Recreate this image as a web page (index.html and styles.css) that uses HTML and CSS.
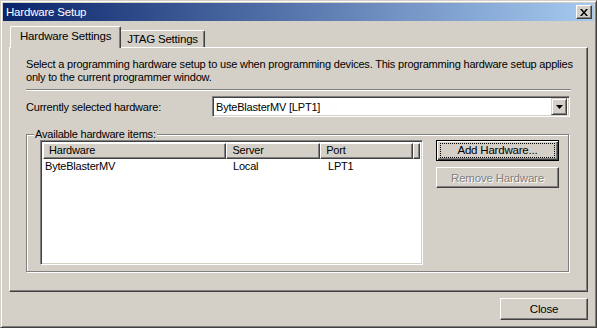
FILE: index.html
```html
<!DOCTYPE html>
<html lang="en">
<head>
    <meta charset="UTF-8">
    <title>Hardware Setup</title>
    <link rel="stylesheet" href="styles.css">
</head>
<body>
    <div class="window">
        <div class="titleBar">
            <span class="titleText">Hardware Setup</span>
            <div class="closeBox">
                <svg width="8" height="7" viewBox="0 0 8 7">
                    <path d="M0 0h2l2 2.5L6 0h2L5 3.5 8 7H6L4 4.5 2 7H0l3-3.5z" fill="#000"/>
                </svg>
            </div>
        </div>

        <div class="tabRow">
            <div class="tab selected">Hardware Settings</div>
            <div class="tab">JTAG Settings</div>
        </div>

        <div class="tabPanel">
            <p class="intro">Select a programming hardware setup to use when programming devices. This programming hardware setup applies only to the current programmer window.</p>
            <div class="separator"></div>

            <div class="selectRow">
                <span class="label">Currently selected hardware:</span>
                <div class="combo">
                    <span class="comboText">ByteBlasterMV [LPT1]</span>
                    <div class="comboButton">
                        <svg width="7" height="4" viewBox="0 0 7 4"><path d="M0 0h7L3.5 4z" fill="#000"/></svg>
                    </div>
                </div>
            </div>

            <fieldset class="groupBox">
                <legend>Available hardware items:</legend>
                <div class="groupInner">
                    <div class="listView">
                        <div class="listHeader">
                            <div class="headCell colHardware">Hardware</div>
                            <div class="headCell colServer">Server</div>
                            <div class="headCell colPort">Port</div>
                            <div class="headCell colFill"></div>
                        </div>
                        <div class="listRow">
                            <div class="cell colHardware">ByteBlasterMV</div>
                            <div class="cell colServer">Local</div>
                            <div class="cell colPort">LPT1</div>
                        </div>
                    </div>
                    <div class="sideButtons">
                        <button class="btn default"><span class="focus">Add Hardware...</span></button>
                        <button class="btn" disabled>Remove Hardware</button>
                    </div>
                </div>
            </fieldset>
        </div>

        <div class="footer">
            <button class="btn closeBtn">Close</button>
        </div>
    </div>
</body>
</html>
```

FILE: styles.css
```css
body {
    margin: 0;
    font-family: "Liberation Sans", Arial, sans-serif;
    font-size: 11px;
    letter-spacing: -0.2px;
    color: #000;
}

.window {
    width: 597px;
    height: 328px;
    box-sizing: border-box;
    background: #d4d0c8;
    border: 1px solid;
    border-color: #d4d0c8 #404040 #404040 #d4d0c8;
    box-shadow: inset 1px 1px #fff, inset -1px -1px #808080;
    padding: 2px;
    display: flex;
    flex-direction: column;
}

.titleBar {
    height: 18px;
    display: flex;
    align-items: center;
    justify-content: space-between;
    background: linear-gradient(to right, #0a246a, #a6caf0);
    color: #fff;
    padding: 0 2px 0 3px;
}

.titleText {
    font-size: 11.5px;
}

.closeBox {
    width: 14px;
    height: 12px;
    background: #d4d0c8;
    border: 1px solid;
    border-color: #fff #404040 #404040 #fff;
    box-shadow: inset -1px -1px #808080;
    display: flex;
    align-items: center;
    justify-content: center;
}

.tabRow {
    display: flex;
    align-items: flex-end;
    height: 21px;
    margin: 6px 0 0 6px;
    position: relative;
    z-index: 1;
}

.tab {
    height: 15px;
    padding: 1px 6px 0 6px;
    border: 1px solid;
    border-bottom: none;
    border-color: #fff #404040 #404040 #fff;
    box-shadow: inset -1px 0 #808080;
    border-radius: 2px 2px 0 0;
    line-height: 14px;
    background: #d4d0c8;
    margin-bottom: 1px;
    font-size: 11.5px;
}

.tab.selected {
    height: 20px;
    padding: 1px 9px 0 9px;
    margin: 0 -1px 0 1px;
    line-height: 17px;
    position: relative;
    z-index: 2;
}

.tabPanel {
    margin: -1px 6px 0 6px;
    height: 245px;
    box-sizing: border-box;
    border: 1px solid;
    border-color: #fff #404040 #404040 #fff;
    box-shadow: inset -1px -1px #808080;
    padding: 10px 16px 0 16px;
}

.intro {
    margin: 0;
    line-height: 13px;
    width: 556px;
}

.separator {
    margin: 5px 0 0 0;
    height: 1px;
    width: 545px;
    background: #808080;
    border-bottom: 1px solid #fff;
}

.selectRow {
    display: flex;
    align-items: center;
    margin-top: 5px;
}

.label {
    width: 186px;
}

.combo {
    width: 358px;
    height: 21px;
    box-sizing: border-box;
    background: #fff;
    border: 1px solid;
    border-color: #808080 #fff #fff #808080;
    box-shadow: inset 1px 1px #404040, inset -1px -1px #d4d0c8;
    display: flex;
    align-items: center;
    justify-content: space-between;
    padding: 2px;
}

.comboText {
    padding-left: 1px;
}

.comboButton {
    width: 14px;
    height: 15px;
    background: #d4d0c8;
    border: 1px solid;
    border-color: #d4d0c8 #404040 #404040 #d4d0c8;
    box-shadow: inset 1px 1px #fff, inset -1px -1px #808080;
    display: flex;
    align-items: center;
    justify-content: center;
}

.groupBox {
    margin: 11px 0 0 0;
    width: 543px;
    height: 144px;
    box-sizing: border-box;
    padding: 0 9px 0 13px;
    border: 1px solid #808080;
    box-shadow: inset 1px 1px #fff, 1px 1px #fff;
}

.groupBox legend {
    padding: 0 1px;
    margin-left: -6px;
    line-height: 12px;
    background: #d4d0c8;
}

.groupInner {
    display: flex;
    justify-content: space-between;
    margin-top: 0;
}

.listView {
    width: 383px;
    height: 125px;
    box-sizing: border-box;
    background: #fff;
    border: 1px solid;
    border-color: #808080 #fff #fff #808080;
    box-shadow: inset 1px 1px #404040, inset -1px -1px #d4d0c8;
    padding: 2px;
    overflow: hidden;
}

.listHeader {
    display: flex;
    height: 16px;
}

.headCell {
    box-sizing: border-box;
    height: 16px;
    background: #d4d0c8;
    border: 1px solid;
    border-color: #fff #404040 #404040 #fff;
    box-shadow: inset -1px -1px #808080;
    padding-left: 5px;
    line-height: 13px;
}

.colHardware {
    width: 186px;
}

.colServer {
    width: 95px;
}

.colPort {
    width: 94px;
}

.colFill {
    flex: 1;
}

.listRow {
    display: flex;
    height: 14px;
    line-height: 14px;
}

.cell {
    padding-left: 2px;
    box-sizing: border-box;
}

.colServer.cell,
.colPort.cell {
    padding-left: 4px;
}

.sideButtons {
    display: flex;
    flex-direction: column;
    gap: 6px;
}

.btn {
    width: 123px;
    height: 21px;
    font-family: inherit;
    font-size: 11.5px;
    letter-spacing: -0.2px;
    color: #000;
    background: #d4d0c8;
    border: 1px solid;
    border-color: #fff #404040 #404040 #fff;
    box-shadow: inset -1px -1px #808080;
    padding: 0;
    display: flex;
    align-items: center;
    justify-content: center;
}

.btn.default {
    border: 1px solid #000;
    box-shadow: inset 1px 1px #fff, inset -1px -1px #404040, inset -2px -2px #808080;
}

.focus {
    display: block;
    width: 113px;
    height: 13px;
    line-height: 13px;
    outline: 1px dotted #000;
}

.btn:disabled {
    color: #808080;
    text-shadow: 1px 1px #fff;
}

.footer {
    display: flex;
    justify-content: flex-end;
    margin: 6px 6px 0 0;
}

.closeBtn {
    width: 88px;
    height: 22px;
}
```
